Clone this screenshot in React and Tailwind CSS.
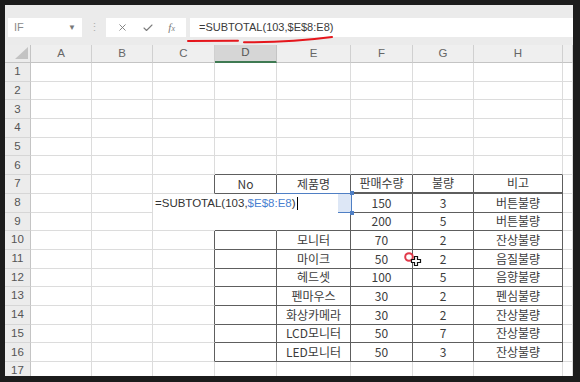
import React from "react";
import { X, Check } from "lucide-react";

const COLS = ["A", "B", "C", "D", "E", "F", "G", "H", ""];
const ROW_H = 18.7;
const COL_X = [26, 87, 148, 210, 272, 346, 408, 469, 558];

// table D7:H16 — null = outside the bordered block
const TABLE = {
  7: ["No", "제품명", "판매수량", "불량", "비고"],
  8: [null, null, "150", "3", "버튼불량"],
  9: [null, null, "200", "5", "버튼불량"],
  10: ["", "모니터", "70", "2", "잔상불량"],
  11: ["", "마이크", "50", "2", "음질불량"],
  12: ["", "헤드셋", "100", "5", "음향불량"],
  13: ["", "펜마우스", "30", "2", "펜심불량"],
  14: ["", "화상카메라", "30", "2", "잔상불량"],
  15: ["", "LCD모니터", "50", "7", "잔상불량"],
  16: ["", "LED모니터", "50", "3", "잔상불량"],
};

function tableValue(ci, r) {
  if (ci < 3 || ci > 7) return null;
  const row = TABLE[r];
  if (!row) return null;
  return row[ci - 3];
}

const isTable = (ci, r) => tableValue(ci, r) !== null;

function Cell({ ci, r }) {
  const inT = isTable(ci, r);
  const right = inT || isTable(ci + 1, r) ? "border-r-[#5e5e5e]" : "border-r-[#dcdcdc]";
  const bottom = inT || isTable(ci, r + 1) ? "border-b-[#5e5e5e]" : "border-b-[#dcdcdc]";
  const thick = r === 7 && ci >= 5 && ci <= 7 ? "border-b-2" : "border-b";
  const v = tableValue(ci, r);
  return (
    <div
      className={`bg-white border-r ${thick} ${right} ${bottom} flex items-center justify-center overflow-hidden whitespace-nowrap text-[12px] leading-none text-[#3c3c3c] font-['Noto_Sans_CJK_KR',sans-serif]`}
    >
      {v}
    </div>
  );
}

function Toolbar() {
  return (
    <div className="relative h-[40px] bg-[#ebebeb] flex items-start pt-[13px] pl-[3px]">
      <div className="w-[74px] h-[19px] bg-white flex items-center justify-between px-[6px] text-[11px] text-[#8a8a8a] font-['Liberation_Sans',sans-serif]">
        <span>IF</span>
        <span className="text-[8px] text-[#777]">▼</span>
      </div>
      <div className="w-[24px] h-[19px] flex items-center justify-center text-[11px] text-[#b0b0b0]">⋮</div>
      <div className="w-[80px] h-[19px] bg-white flex items-center justify-around px-[4px] text-[#7c7c7c]">
        <X size={11} strokeWidth={2} />
        <Check size={12} strokeWidth={2.2} />
        <span className="text-[11px] italic font-['Liberation_Serif',serif] leading-none">
          f<span className="text-[8px]">x</span>
        </span>
      </div>
      <div className="ml-[4px] flex-1 h-[19px] bg-white flex items-center pl-[9px] text-[11px] text-[#3a3a3a] font-['Liberation_Sans',sans-serif]">
        =SUBTOTAL(103,$E$8:E8)
      </div>
      <svg className="absolute left-[178px] top-[30px]" width="150" height="10" viewBox="183 35 150 10">
        <path d="M188 41 L238 40.8 M244 42.2 Q290 42.5 332 37" stroke="#e5161c" strokeWidth="2" fill="none" strokeLinecap="round" />
      </svg>
    </div>
  );
}

function Sheet() {
  const rows = Array.from({ length: 17 }, (_, i) => i + 1);
  return (
    <div className="relative flex-1 overflow-hidden grid grid-cols-[26px_61px_61px_62px_62px_74px_62px_61px_89px_10px] grid-rows-[18px_repeat(17,18.7px)] font-['Liberation_Sans',sans-serif]">
      {/* corner */}
      <div className="bg-[#ececec] border-r border-b border-[#c4c4c4] relative">
        <svg className="absolute right-[1px] bottom-[2px]" width="14" height="13">
          <polygon points="13,0 13,12 0,12" fill="#c3c3c3" />
        </svg>
      </div>
      {COLS.map((c, i) => (
        <div
          key={c + i}
          className={
            c === "D"
              ? "bg-[#d6d6d6] border-r border-r-[#c4c4c4] border-b-2 border-b-[#3f7a52] flex items-center justify-center text-[11.5px] text-[#555]"
              : "bg-[#efefef] border-r border-r-[#d0d0d0] border-b border-b-[#c4c4c4] flex items-center justify-center text-[11.5px] text-[#666]"
          }
        >
          {c}
        </div>
      ))}
      {rows.map((r) => (
        <React.Fragment key={r}>
          <div className="bg-[#ececec] border-r border-r-[#c4c4c4] border-b border-b-[#d6d6d6] flex items-center justify-center text-[11.5px] text-[#555]">
            {r}
          </div>
          {COLS.map((_, ci) => (
            <Cell key={ci} ci={ci} r={r} />
          ))}
        </React.Fragment>
      ))}

      {/* E8 reference highlight */}
      <div
        className="absolute border border-[#4f7fc4] bg-[#dde7f6]"
        style={{ left: COL_X[4] - 1, top: 18 + 7 * ROW_H - 1, width: 76, height: ROW_H + 1.5 }}
      >
        <span className="absolute -right-[2.5px] -top-[2.5px] w-[4px] h-[4px] bg-[#4f7fc4]" />
        <span className="absolute -right-[2.5px] -bottom-[2.5px] w-[4px] h-[4px] bg-[#4f7fc4]" />
        <span className="absolute -left-[2.5px] -bottom-[2.5px] w-[4px] h-[4px] bg-[#4f7fc4]" />
      </div>

      {/* in-cell edit box */}
      <div
        className="absolute bg-white"
        style={{ left: 148, top: 18 + 7 * ROW_H, width: 185, height: 2 * ROW_H - 1 }}
      >
        <div
          className="flex items-center pl-[2px] text-[11.5px] text-[#333] font-['Liberation_Sans',sans-serif] whitespace-nowrap"
          style={{ height: ROW_H }}
        >
          =SUBTOTAL(103,<span className="text-[#4a7fd0]">$E$8:E8</span>)
          <span className="ml-[1px] w-[1px] h-[13px] bg-black" />
        </div>
      </div>

      {/* mouse cursor */}
      <svg className="absolute left-[398px] top-[206px]" width="24" height="24">
        <circle cx="6" cy="6" r="3.8" fill="none" stroke="#e23a4a" strokeWidth="2" />
        <path
          d="M9 9 h3 v-3 h3 v3 h3 v3 h-3 v3 h-3 v-3 h-3 z"
          fill="#fff"
          stroke="#111"
          strokeWidth="1.2"
          transform="translate(-0.5 -0.5)"
        />
      </svg>
    </div>
  );
}

export default function App() {
  return (
    <div className="w-[580px] h-[382px] bg-[#1c1c1c] pt-[5px] pl-[5px] pr-[7px] pb-[6px]">
      <div className="w-full h-full bg-white flex flex-col overflow-hidden">
        <Toolbar />
        <Sheet />
      </div>
    </div>
  );
}
